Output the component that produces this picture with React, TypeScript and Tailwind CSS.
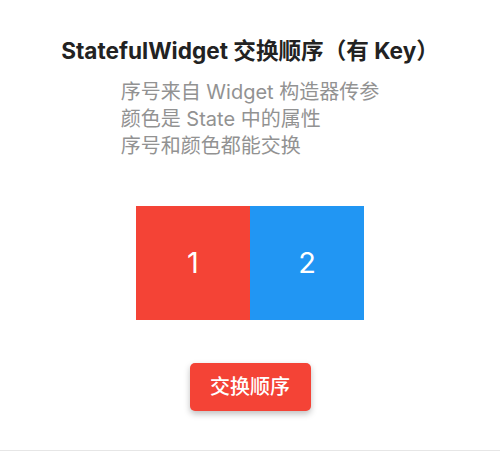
import React, { useState } from 'react';

const font = { fontFamily: 'Inter, "Noto Sans CJK SC", sans-serif' };

const App = () => {
  const [items, setItems] = useState([
    { id: 1, color: 'bg-[#f44336]' },
    { id: 2, color: 'bg-[#2196f3]' },
  ]);

  const swap = () => setItems(prev => [prev[1], prev[0]]);

  return (
    <div className="w-[500px] h-[451px] bg-white border-b border-[#e6e6e6] flex flex-col items-center pt-[37px]" style={font}>
      <h1 className="text-[22.6px] leading-[28px] font-bold text-[#222]">StatefulWidget 交换顺序（有 Key）</h1>

      <div className="mt-[14px] text-[20px] leading-[27px] text-[#929292]">
        <p>序号来自 Widget 构造器传参</p>
        <p>颜色是 State 中的属性</p>
        <p>序号和颜色都能交换</p>
      </div>

      <div className="mt-[46px] flex">
        {items.map(item => (
          <div key={item.id} className={`w-[114px] h-[114px] ${item.color} flex items-center justify-center text-white text-[29px]`}>
            {item.id}
          </div>
        ))}
      </div>

      <button
        onClick={swap}
        className="mt-[43px] w-[121px] h-[48px] rounded-[5px] bg-[#f44336] text-white text-[20px] font-medium shadow-[0_3px_6px_rgba(0,0,0,0.25)]"
      >
        交换顺序
      </button>
    </div>
  );
};

export default App;
